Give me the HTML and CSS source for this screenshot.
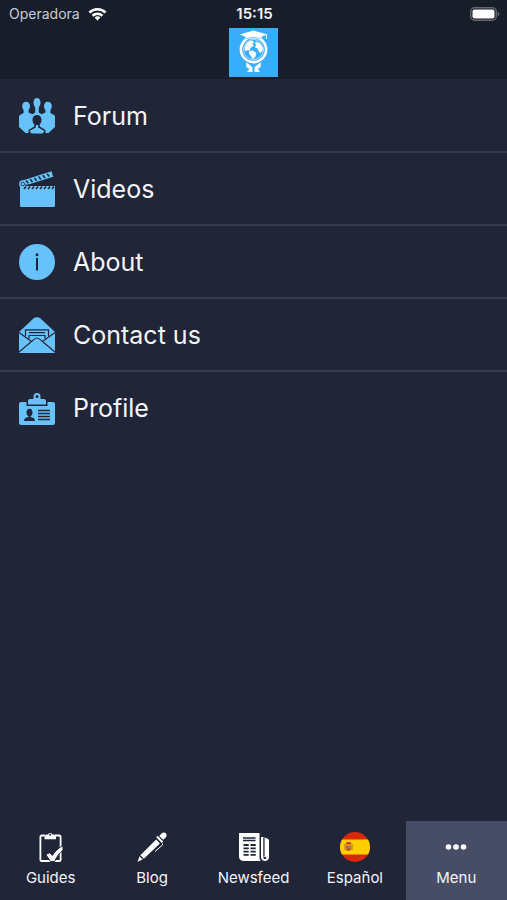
FILE: index.html
```html
<!DOCTYPE html>
<html lang="en">
<head>
    <meta charset="UTF-8">
    <meta name="viewport" content="width=device-width, initial-scale=1.0">
    <title>Menu</title>
    <link rel="stylesheet" href="styles.css">
</head>
<body>
    <header class="top-bar">
        <div class="status-bar">
            <div class="carrier">
                <span>Operadora</span>
                <svg class="wifi" viewBox="0 0 20 14" aria-hidden="true">
                    <g fill="none" stroke="#fff" stroke-width="2.8">
                        <path d="M1.5 5.4a12.4 12.4 0 0 1 17 0"/>
                        <path d="M4.8 8.8a7.6 7.6 0 0 1 10.4 0"/>
                    </g>
                    <path fill="#fff" d="M10 14l-3-3.2a4.4 4.4 0 0 1 6 0z"/>
                </svg>
            </div>
            <time class="clock">15:15</time>
            <svg class="battery" viewBox="0 0 30 14" aria-hidden="true">
                <rect x="0.7" y="0.7" width="25.6" height="12.6" rx="4" fill="none" stroke="#646873" stroke-width="1.4"/>
                <rect x="2.5" y="2.5" width="22" height="9" rx="2" fill="#fff"/>
                <path fill="#646873" d="M27.6 4.6c2.4.8 2.4 4 0 4.8z"/>
            </svg>
        </div>
        <svg class="logo" viewBox="0 0 49 49" role="img" aria-label="Home">
            <rect width="49" height="49" fill="#38adfb"/>
            <circle cx="24.5" cy="21.5" r="12.6" fill="#38adfb" stroke="#fff" stroke-width="2.6"/>
            <circle cx="24.5" cy="21.5" r="10" fill="none" stroke="#b9e2ff" stroke-width="1"/>
            <g fill="#fff">
                <path d="M16 18c1-3 4-5.400 7-5.500l2 1.500-1.500 2 1.500 1.500-3.500 2.500-1 2.500-2.500-.5-.5 1.500-2-1.500z"/>
                <path d="M20 23l4-.5 3.500 2.500-1 3.500-2.500 2.500-2-2.500-2-3z"/>
                <path d="M27 13.500l4 2 2.500 3.500.5 3-2.500 3-2-2-1-2.500-2.500-1 1-2.500-1-2z"/>
                <path d="M24.500 2.500l14 4-6 2.200v3.300c-5-2-11-2-16 0V8.700l-6-2.200z"/>
                <path d="M37 7h1v4h-1z"/>
                <path d="M17 34.500c2.500 1 5 3 6.500 5v4.500h-5v-1.500l2-1-3-2.500z"/>
                <path d="M32 34.500c-2.500 1-5 3-6.500 5v4.500h5v-1.500l-2-1 3-2.500z"/>
            </g>
            <path d="M17 11c5-2 10-2 15 0" fill="none" stroke="#38adfb" stroke-width=".7"/>
        </svg>
    </header>

    <main class="content">
        <nav class="menu" aria-label="More">
            <a class="menu-item" href="#forum">
                <svg class="menu-icon" viewBox="0 0 36 36" aria-hidden="true">
                    <path d="M3.200 8c0-2.700 1.600-4.300 3.900-4.300S11 5.300 11 8c0 1.700-.6 3-1.400 3.900v2.600l3.700 1.700 2.900-1.700V9.200c-1-1-1.700-2.600-1.700-4.400C14.500 1.900 15.800 0 18 0s3.500 1.900 3.500 4.800c0 1.800-.7 3.400-1.700 4.400v5.300l2.900 1.700 3.700-1.700v-2.600C25.600 11 25 9.700 25 8c0-2.700 1.600-4.300 3.900-4.300s3.900 1.600 3.900 4.300c0 1.700-.6 3-1.400 3.900v3.100L35 17c.7.400 1 1 1 1.800V29l-6.500 6H6.500L0 29V18.800c0-.8.300-1.400 1-1.800l3.600-2v-3.100C3.800 11 3.200 9.700 3.200 8z"/>
                    <path class="hole" d="M13.500 21.800c0-3 1.800-4.900 4.500-4.900s4.500 1.900 4.500 4.900c0 2-.7 3.500-1.700 4.500v2.200l5.700 3.500v4h-17v-4l5.700-3.500v-2.200c-1-1-1.700-2.500-1.700-4.500z"/>
                    <path d="M16.800 27h2.400v2.600l6.300 3.400-2 2.500h-11l-2-2.500 6.300-3.400z"/>
                </svg>
                <span>Forum</span>
            </a>
            <a class="menu-item" href="#videos">
                <svg class="menu-icon" viewBox="0 0 36 36" aria-hidden="true">
                    <path d="M1 15h35v19.500a1.500 1.500 0 0 1-1.500 1.500h-32A1.500 1.500 0 0 1 1 34.500z"/>
                    <path d="M2 10L32.500.3l1.700 5.500L4.500 15z"/>
                    <circle cx="3.800" cy="13" r="3.700"/>
                    <path class="cut" d="M7 9.500l2.300 2.800M11.200 8.200l2.300 2.800M15.400 6.900l2.300 2.800M19.600 5.600l2.300 2.800M23.800 4.200l2.300 2.800M28 2.800l2.300 2.800" stroke-width="1.500"/>
                    <path class="cut" d="M7 15.500l-2 2.500M11 15.500l-2 2.500M15 15.500l-2 2.500M19 15.500l-2 2.500M23 15.500l-2 2.500M27 15.500l-2 2.500M31 15.500l-2 2.500M35 15.500l-2 2.500" stroke-width="1.500"/>
                    <path class="cut" d="M6 14.200h30" stroke-width="1"/>
                    <circle class="cut" cx="3.800" cy="13" r="1.800" stroke-width=".8"/>
                </svg>
                <span>Videos</span>
            </a>
            <a class="menu-item" href="#about">
                <svg class="menu-icon" viewBox="0 0 36 36" aria-hidden="true">
                    <circle cx="18" cy="18" r="18"/>
                    <circle class="hole" cx="18" cy="10.800" r="1.500"/>
                    <path class="cut" d="M18 14v12.500" stroke-width="2"/>
                </svg>
                <span>About</span>
            </a>
            <a class="menu-item" href="#contact">
                <svg class="menu-icon" viewBox="0 0 36 36" aria-hidden="true">
                    <path d="M0 15L14.500 1.500c2-1.800 5-1.800 7 0L36 15v20a1 1 0 0 1-1 1H1a1 1 0 0 1-1-1z"/>
                    <path class="cut" stroke-width="1.200" d="M0 15.500l12.500 9L0 35M36 15.500l-12.500 9L36 35M12.500 24.500c3-2.200 3.500-3.500 5.500-3.500s2.500 1.300 5.500 3.500"/>
                    <path class="cut" stroke-width="1.200" d="M6.500 19.200V12.800h23v6.400M10 15.700h16M10 18.500h16v3.200M10 18.500v3.200"/>
                </svg>
                <span>Contact us</span>
            </a>
            <a class="menu-item" href="#profile">
                <svg class="menu-icon" viewBox="0 0 36 36" aria-hidden="true">
                    <path d="M2 12h32a2 2 0 0 1 2 2v19a2 2 0 0 1-2 2H2a2 2 0 0 1-2-2V14a2 2 0 0 1 2-2z"/>
                    <path class="hole" d="M7.500 11h21v5h-21z"/>
                    <path fill-rule="evenodd" d="M14.500 9V6.500a3.500 3.500 0 0 1 7 0V9H25a2 2 0 0 1 2 2v3.500H9V11a2 2 0 0 1 2-2zM18 5a1.500 1.500 0 1 0 0 3 1.500 1.500 0 0 0 0-3z"/>
                    <ellipse class="hole" cx="10.500" cy="22.500" rx="3" ry="3.800"/>
                    <path class="hole" d="M5 31c0-2.500 1.500-3.300 4.500-4v-2h2v2c3 .7 4.500 1.500 4.500 4z"/>
                    <path class="cut" d="M19 20.500h12M19 23.500h12M19 26.500h12M19 29.500h12" stroke-width="1.300"/>
                </svg>
                <span>Profile</span>
            </a>
        </nav>
    </main>

    <nav class="tab-bar" aria-label="Main">
        <a class="tab" href="#guides">
            <svg class="tab-icon" viewBox="0 0 30 30" aria-hidden="true">
                <path fill="none" stroke="#fff" stroke-width="1.800" d="M9 3.500H6a1.600 1.600 0 0 0-1.600 1.600v22.300A1.600 1.600 0 0 0 6 29h17a1.600 1.600 0 0 0 1.600-1.600V5.100A1.600 1.600 0 0 0 23 3.500h-4"/>
                <path fill-rule="evenodd" d="M11.800 2.500a2.600 2.600 0 0 1 4.800 0h1.900l1.500 2v2.800H8.500V4.500l1.500-2zM14.200 1.800a1 1 0 1 0 0 2 1 1 0 0 0 0-2z"/>
                <path class="outlined" d="M9.800 22.500l4-1.800 2.500 2.800c2.500-4 6-7.500 10.700-9.800v4.500c-3.500 3-6.400 6.500-8.500 11.300h-4z"/>
            </svg>
            <span>Guides</span>
        </a>
        <a class="tab" href="#blog">
            <svg class="tab-icon" viewBox="0 0 30 30" aria-hidden="true">
                <path d="M.5 29.700l2-5.500 3.200 3.400zM3.300 23.200L19.200 7.500l3.700 4L6.800 26.800z"/>
                <path d="M19.200 5.300l1.500-1.500 5.500 5.600-1.500 1.500z"/>
                <path d="M22.300 4l2.300-2.500c1.200-1.300 2.900-1.300 4.100-.2 1.200 1.200 1.200 2.800.1 4l-2.500 2.500z"/>
                <path fill="none" stroke="#fff" stroke-width="1" d="M25.500 11.500v1.500l-7.500 6.500"/>
            </svg>
            <span>Blog</span>
        </a>
        <a class="tab" href="#newsfeed">
            <svg class="tab-icon" viewBox="0 0 30 30" aria-hidden="true">
                <path d="M0 1h20.500v24c0 1.800.4 3 1.200 4H5c-3.200 0-5-1.600-5-4.500z"/>
                <path d="M22 5h2.500v20.500c0 2.200 2.700 2.200 2.700 0V10l2.800 1.500V25c0 5.300-8 5.300-8 0z"/>
                <path d="M25.300 5.500l2.500.8c1.300.4 2.200 1.300 2.200 2.700V25h-4.700z"/>
                <path class="cut" d="M4 6h12.500M4 8.500h12.500" stroke-width="1.600"/>
                <path class="cut" d="M4.500 13h5.200M11.500 13h5.200M4.500 16.300h5.200M11.500 16.300h5.200M4.500 19.600h5.200M11.500 19.600h5.200M4.500 22.900h5.200M11.500 22.900h5.200" stroke-width="1.800"/>
                <path class="cut" d="M25 6v18" stroke-width=".8"/>
            </svg>
            <span>Newsfeed</span>
        </a>
        <a class="tab" href="#es">
            <svg class="tab-icon" viewBox="0 0 30 30" aria-hidden="true">
                <clipPath id="flag"><circle cx="15" cy="15" r="15"/></clipPath>
                <g clip-path="url(#flag)">
                    <path fill="#d8290b" d="M0 0h30v30H0z"/>
                    <path fill="#ffcf00" d="M0 7.500h30v15H0z"/>
                    <path fill="#b5652b" d="M4.500 12h1v6h-1zM11.500 12h1v6h-1zM6 13.500h5v3.500c0 2.800-5 2.800-5 0z"/>
                    <path fill="#c43d1c" d="M6.200 12.500l-.4-1.700c1.500-1.200 4.200-1.200 5.500 0l-.5 1.700z"/>
                    <path fill="#9a8780" d="M8.500 14h2v2h-2z"/>
                </g>
            </svg>
            <span>Español</span>
        </a>
        <a class="tab active" href="#menu" aria-current="page">
            <svg class="tab-icon" viewBox="0 0 30 30" aria-hidden="true">
                <circle cx="7.500" cy="15" r="2.800"/>
                <circle cx="15" cy="15" r="2.800"/>
                <circle cx="22.500" cy="15" r="2.800"/>
            </svg>
            <span>Menu</span>
        </a>
    </nav>
</body>
</html>
```
FILE: styles.css
```css
* {
    box-sizing: border-box;
}

body {
    margin: 0;
    min-height: 100vh;
    display: flex;
    flex-direction: column;
    background: #202538;
    color: #f4f5fa;
    font-family: Inter, sans-serif;
}

a {
    color: inherit;
    text-decoration: none;
}

.top-bar {
    display: flex;
    flex-direction: column;
    align-items: center;
    padding-bottom: 2px;
    background: #181d2a;
}

.status-bar {
    display: grid;
    grid-template-columns: 1fr auto 1fr;
    align-items: center;
    width: 100%;
    height: 28px;
    padding: 0 7px 0 9px;
    font-size: 14px;
    line-height: 20px;
}

.carrier {
    display: flex;
    align-items: center;
    gap: 8px;
    color: #c9ccd6;
}

.wifi {
    width: 19px;
    height: 14px;
}

.clock {
    font-size: 15px;
    font-weight: 600;
}

.battery {
    width: 30px;
    height: 14px;
    justify-self: end;
}

.logo {
    width: 49px;
    height: 49px;
}

.content {
    flex: 1;
    padding-top: 1px;
}

.menu-item {
    display: flex;
    align-items: center;
    gap: 18px;
    padding: 18px 19px 17px;
    border-bottom: 2px solid #353a4c;
    font-size: 25px;
    line-height: 36px;
}

.menu-item:last-child {
    border-bottom: none;
}

.menu-icon {
    width: 36px;
    height: 36px;
    fill: #67c2fb;
}

.menu-icon .cut,
.tab-icon .cut {
    fill: none;
    stroke: #202538;
}

.menu-icon .hole {
    fill: #202538;
}

.tab-bar {
    display: flex;
}

.tab {
    flex: 1 1 0;
    min-width: 0;
    display: flex;
    flex-direction: column;
    align-items: center;
    gap: 6px;
    padding: 11px 0 12px;
    font-size: 15px;
    line-height: 20px;
}

.tab.active {
    background: #474d65;
}

.tab-icon {
    width: 30px;
    height: 30px;
    fill: #fff;
}

.outlined {
    stroke: #202538;
    stroke-width: 1;
}
```
